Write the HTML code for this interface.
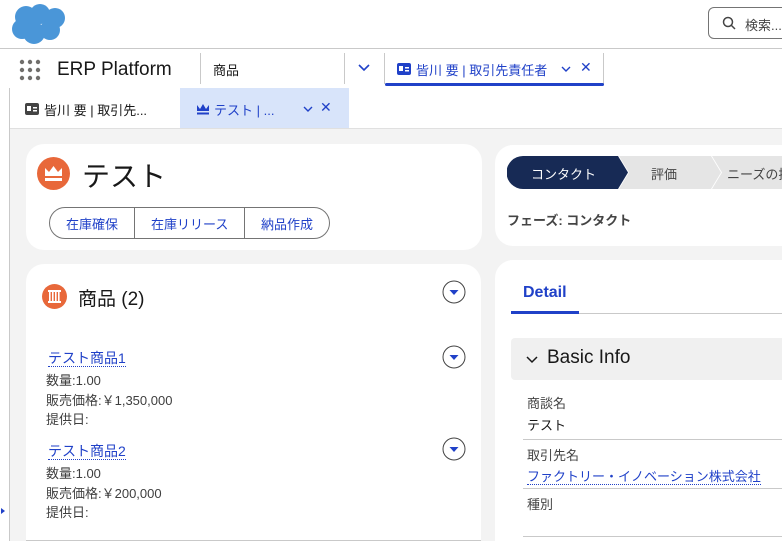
<!DOCTYPE html>
<html><head><meta charset="utf-8"><style>
*{box-sizing:border-box;margin:0;padding:0}
body{width:782px;height:541px;overflow:hidden;background:#fff;font-family:"Liberation Sans","Noto Sans CJK JP",sans-serif;color:#181818;position:relative}
.a{position:absolute}
.link{color:#2041c8;border-bottom:1px dotted #2041c8}
</style></head><body>
<svg class="a" style="left:10px;top:2px" width="62" height="44" viewBox="0 0 62 42"><g fill="#4a96d8"><circle cx="16" cy="14" r="11"/><circle cx="30" cy="11" r="10"/><circle cx="45" cy="15" r="10"/><circle cx="12" cy="26" r="10"/><circle cx="24" cy="30" r="11"/><circle cx="40" cy="27" r="10"/></g></svg>
<div class="a" style="left:708px;top:7px;width:90px;height:32px;border:1px solid #747474;border-radius:6px"></div>
<svg class="a" style="left:722px;top:16px" width="14" height="14"><circle cx="6" cy="6" r="4.5" fill="none" stroke="#444" stroke-width="1.5"/><path d="M9 9l4 4" stroke="#444" stroke-width="1.5"/></svg>
<div class="a" style="left:745px;top:15px;font-size:13px;color:#444">検索...</div>
<div class="a" style="left:0;top:48px;width:782px;height:1px;background:#c9c9c9"></div>
<svg class="a" style="left:19px;top:59px" width="22" height="22"><g fill="#706e6b"><circle cx="3" cy="3" r="2.2"/><circle cx="11" cy="3" r="2.2"/><circle cx="19" cy="3" r="2.2"/><circle cx="3" cy="11" r="2.2"/><circle cx="11" cy="11" r="2.2"/><circle cx="19" cy="11" r="2.2"/><circle cx="3" cy="19" r="2.2"/><circle cx="11" cy="19" r="2.2"/><circle cx="19" cy="19" r="2.2"/></g></svg>
<div class="a" style="left:57px;top:59px;font-size:19px;color:#181818">ERP Platform</div>
<div class="a" style="left:200px;top:53px;width:1px;height:31px;background:#c9c9c9"></div>
<div class="a" style="left:213px;top:60px;font-size:13px">商品</div>
<div class="a" style="left:344px;top:53px;width:1px;height:31px;background:#c9c9c9"></div>
<svg class="a" style="left:357px;top:63px" width="14" height="10"><path d="M2 2l5 5 5-5" fill="none" stroke="#2041c8" stroke-width="1.6"/></svg>
<div class="a" style="left:384px;top:53px;width:1px;height:31px;background:#c9c9c9"></div>
<div class="a" style="left:603px;top:53px;width:1px;height:31px;background:#c9c9c9"></div>
<div class="a" style="left:385px;top:83px;width:219px;height:3px;background:#2041c8;border-radius:2px"></div>
<svg class="a" style="left:397px;top:63px" width="14" height="12"><rect width="14" height="12" rx="2" fill="#2041c8"/><rect x="2" y="3" width="4" height="5" fill="#fff"/><rect x="8" y="4" width="4" height="1.5" fill="#fff"/><rect x="8" y="7" width="4" height="1.5" fill="#fff"/></svg>
<div class="a" style="left:416px;top:60px;font-size:13px;color:#2041c8">皆川 要 | 取引先責任者</div>
<svg class="a" style="left:560px;top:65px" width="12" height="8"><path d="M2 2l4 4 4-4" fill="none" stroke="#2041c8" stroke-width="1.4"/></svg>
<div class="a" style="left:580px;top:59px;font-size:14px;color:#2041c8">✕</div>
<div class="a" style="left:9px;top:88px;width:1px;height:453px;background:#c9c9c9"></div>
<svg class="a" style="left:25px;top:103px" width="14" height="12"><rect width="14" height="12" rx="2" fill="#444"/><rect x="2" y="3" width="4" height="5" fill="#fff"/><rect x="8" y="4" width="4" height="1.5" fill="#fff"/><rect x="8" y="7" width="4" height="1.5" fill="#fff"/></svg>
<div class="a" style="left:44px;top:100px;font-size:13px;color:#181818">皆川 要 | 取引先...</div>
<div class="a" style="left:180px;top:88px;width:169px;height:40px;background:#d8e4fa"></div>
<svg class="a" style="left:196px;top:102px" width="14" height="13"><path d="M1 3l3 4 3-5 3 5 3-4v6H1z" fill="#2041c8"/><rect x="1" y="10.5" width="12" height="2" fill="#2041c8"/></svg>
<div class="a" style="left:214px;top:100px;font-size:13px;color:#2041c8">テスト | ...</div>
<svg class="a" style="left:302px;top:105px" width="12" height="8"><path d="M2 2l4 4 4-4" fill="none" stroke="#2041c8" stroke-width="1.4"/></svg>
<div class="a" style="left:320px;top:99px;font-size:14px;color:#2041c8">✕</div>
<div class="a" style="left:10px;top:128px;width:772px;height:413px;background:#f3f3f3;border-top:1px solid #e0e0e0"></div>
<div class="a" style="left:26px;top:144px;width:456px;height:106px;background:#fff;border-radius:18px"></div>
<svg class="a" style="left:37px;top:157px" width="33" height="33"><circle cx="16.5" cy="16.5" r="16.5" fill="#e8683a"/><path d="M8 11l4 4 4.5-6 4.5 6 4-4v8H8z" fill="#fff"/><rect x="8" y="21" width="17" height="3" fill="#fff"/></svg>
<div class="a" style="left:82px;top:155px;font-size:28px;color:#181818">テスト</div>
<div class="a" style="left:49px;top:207px;width:281px;height:32px;border:1px solid #747474;border-radius:16px"></div>
<div class="a" style="left:134px;top:207px;width:1px;height:32px;background:#747474"></div>
<div class="a" style="left:244px;top:207px;width:1px;height:32px;background:#747474"></div>
<div class="a" style="left:66px;top:214px;font-size:13px;color:#2041c8">在庫確保</div>
<div class="a" style="left:151px;top:214px;font-size:13px;color:#2041c8">在庫リリース</div>
<div class="a" style="left:261px;top:214px;font-size:13px;color:#2041c8">納品作成</div>
<div class="a" style="left:26px;top:264px;width:455px;height:277px;background:#fff;border-radius:18px 18px 0 0;border-bottom:1px solid #c9c9c9"></div>
<svg class="a" style="left:42px;top:284px" width="25" height="25"><circle cx="12.5" cy="12.5" r="12.5" fill="#e8683a"/><g fill="#fff"><rect x="6" y="6" width="13" height="2"/><rect x="6" y="17" width="13" height="2"/><rect x="7" y="8" width="1.6" height="9"/><rect x="10" y="8" width="1.6" height="9"/><rect x="13" y="8" width="1.6" height="9"/><rect x="16" y="8" width="1.6" height="9"/></g></svg>
<div class="a" style="left:78px;top:284px;font-size:19px;color:#181818">商品 (2)</div>
<svg class="a" style="left:442px;top:280px" width="24" height="24"><circle cx="12" cy="12" r="11" fill="#fff" stroke="#444"/><path d="M7.5 10h9l-4.5 5z" fill="#2041c8"/></svg>
<div class="a" style="left:48px;top:348px;font-size:14px"><span class="link">テスト商品1</span></div>
<svg class="a" style="left:442px;top:345px" width="24" height="24"><circle cx="12" cy="12" r="11" fill="#fff" stroke="#444"/><path d="M7.5 10h9l-4.5 5z" fill="#2041c8"/></svg>
<div class="a" style="left:46px;top:371px;font-size:13px;line-height:19.5px;color:#3e3e3e">数量:1.00<br>販売価格:￥1,350,000<br>提供日:</div>
<div class="a" style="left:48px;top:441px;font-size:14px"><span class="link">テスト商品2</span></div>
<svg class="a" style="left:442px;top:437px" width="24" height="24"><circle cx="12" cy="12" r="11" fill="#fff" stroke="#444"/><path d="M7.5 10h9l-4.5 5z" fill="#2041c8"/></svg>
<div class="a" style="left:46px;top:464px;font-size:13px;line-height:19.5px;color:#3e3e3e">数量:1.00<br>販売価格:￥200,000<br>提供日:</div>
<svg class="a" style="left:0;top:507px" width="6" height="8"><path d="M1 1l4 3-4 3z" fill="#2041c8"/></svg>
<div class="a" style="left:495px;top:145px;width:300px;height:101px;background:#fff;border-radius:18px 0 0 18px"></div>
<svg class="a" style="left:507px;top:156px" width="275" height="33"><path d="M16 0H111l10 16.5L111 33H16A16 16 0 0 1 16 0z" fill="#172a55"/><path d="M112 0H204l10 16.5L204 33H112l10-16.5z" fill="#e5e5e5"/><path d="M205 0H280V33H205l10-16.5z" fill="#e5e5e5"/></svg>
<div class="a" style="left:531px;top:164px;font-size:13px;color:#fff">コンタクト</div>
<div class="a" style="left:651px;top:164px;font-size:13px;color:#444">評価</div>
<div class="a" style="left:727px;top:164px;font-size:13px;color:#444;white-space:nowrap">ニーズの把握</div>
<div class="a" style="left:507px;top:210px;font-size:13px;font-weight:bold;color:#444">フェーズ: コンタクト</div>
<div class="a" style="left:495px;top:260px;width:300px;height:281px;background:#fff;border-radius:18px 0 0 0"></div>
<div class="a" style="left:523px;top:284px;font-size:16px;font-weight:bold;color:#2041c8">Detail</div>
<div class="a" style="left:511px;top:313px;width:271px;height:1px;background:#c9c9c9"></div>
<div class="a" style="left:511px;top:311px;width:68px;height:3px;background:#2041c8"></div>
<div class="a" style="left:511px;top:338px;width:271px;height:42px;background:#f0f0f0;border-radius:4px 0 0 4px"></div>
<svg class="a" style="left:525px;top:355px" width="14" height="10"><path d="M2 2l5 5 5-5" fill="none" stroke="#181818" stroke-width="1.5"/></svg>
<div class="a" style="left:547px;top:347px;font-size:19px;color:#181818">Basic Info</div>
<div class="a" style="left:527px;top:393px;font-size:13px;color:#444">商談名</div>
<div class="a" style="left:527px;top:415px;font-size:13px;color:#181818">テスト</div>
<div class="a" style="left:523px;top:439px;width:259px;height:1px;background:#c9c9c9"></div>
<div class="a" style="left:527px;top:445px;font-size:13px;color:#444">取引先名</div>
<div class="a" style="left:527px;top:466px;font-size:13px;white-space:nowrap"><span class="link">ファクトリー・イノベーション株式会社</span></div>
<div class="a" style="left:523px;top:488px;width:259px;height:1px;background:#c9c9c9"></div>
<div class="a" style="left:527px;top:494px;font-size:13px;color:#444">種別</div>
<div class="a" style="left:523px;top:536px;width:259px;height:1px;background:#c9c9c9"></div>
</body></html>
